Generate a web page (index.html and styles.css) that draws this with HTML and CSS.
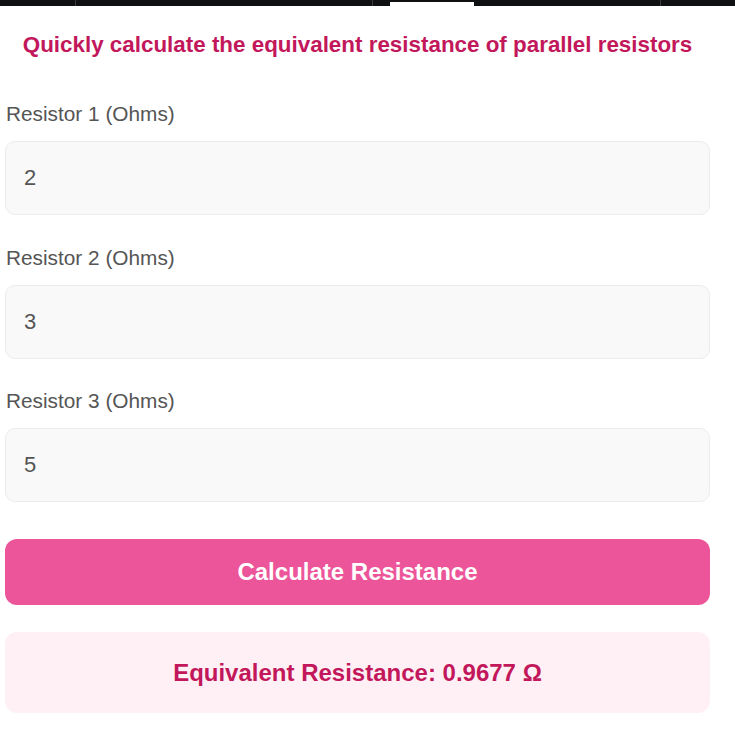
FILE: index.html
```html
<!DOCTYPE html>
<html lang="en">
<head>
<meta charset="utf-8">
<title>Parallel Resistor Calculator</title>
<link rel="stylesheet" href="styles.css">
</head>
<body>
<nav class="tabbar">
  <div class="tab tab-a"></div>
  <div class="tab tab-b"></div>
  <div class="tab tab-c"><span class="tab-indicator"></span></div>
  <div class="tab tab-d"></div>
</nav>
<main class="calc">
  <h1 class="calc-title">Quickly calculate the equivalent resistance of parallel resistors</h1>
  <div class="field">
    <label class="field-label" for="r1">Resistor 1 (Ohms)</label>
    <input class="field-input" id="r1" type="number" value="2">
  </div>
  <div class="field">
    <label class="field-label" for="r2">Resistor 2 (Ohms)</label>
    <input class="field-input" id="r2" type="number" value="3">
  </div>
  <div class="field">
    <label class="field-label" for="r3">Resistor 3 (Ohms)</label>
    <input class="field-input" id="r3" type="number" value="5">
  </div>
  <button class="calc-button" type="button">Calculate Resistance</button>
  <div class="calc-result">Equivalent Resistance: 0.9677 Ω</div>
</main>
</body>
</html>
```
FILE: styles.css
```css
* {
  box-sizing: border-box;
}

body {
  margin: 0;
  background: #ffffff;
  font-family: "Liberation Sans", Arial, sans-serif;
}

/* top tab strip */
.tabbar {
  display: flex;
  height: 6px;
  background: #0f1011;
}

.tab {
  height: 6px;
}

.tab + .tab {
  border-left: 1px solid #3a3b3d;
}

.tab-a { width: 75px; }
.tab-b { width: 297px; }
.tab-c { width: 288px; padding-left: 17px; padding-top: 2px; }
.tab-d { flex: 1; }

.tab-indicator {
  display: block;
  width: 84px;
  height: 4px;
  background: #ffffff;
}

/* calculator card */
.calc {
  width: 705px;
  margin-left: 5px;
  display: flex;
  flex-direction: column;
}

.calc-title {
  margin: 26px 0 44px;
  font-size: 22.4px;
  line-height: 26px;
  font-weight: 700;
  text-align: center;
  color: #c2185b;
}

.field {
  display: flex;
  flex-direction: column;
  margin-bottom: 30.5px;
}

.field-label {
  font-size: 20.8px;
  line-height: 24px;
  color: #555555;
  margin: 0 0 15px 1px;
}

.field-input {
  height: 74px;
  padding: 0 18px;
  border: 1px solid #ececec;
  border-radius: 10px;
  background: #f9f9f9;
  font-family: inherit;
  font-size: 22px;
  color: #555555;
  outline: none;
  -moz-appearance: textfield;
}

.field-input::-webkit-outer-spin-button,
.field-input::-webkit-inner-spin-button {
  -webkit-appearance: none;
  margin: 0;
}

.calc-button {
  margin-top: 6.5px;
  height: 66px;
  border: none;
  border-radius: 12px;
  background: #ec5599;
  color: #ffffff;
  font-family: inherit;
  font-size: 24px;
  font-weight: 700;
  cursor: pointer;
}

.calc-result {
  margin-top: 27px;
  height: 81px;
  display: flex;
  align-items: center;
  justify-content: center;
  border-radius: 12px;
  background: #fff0f5;
  color: #c2185b;
  font-size: 24px;
  font-weight: 700;
}
```
